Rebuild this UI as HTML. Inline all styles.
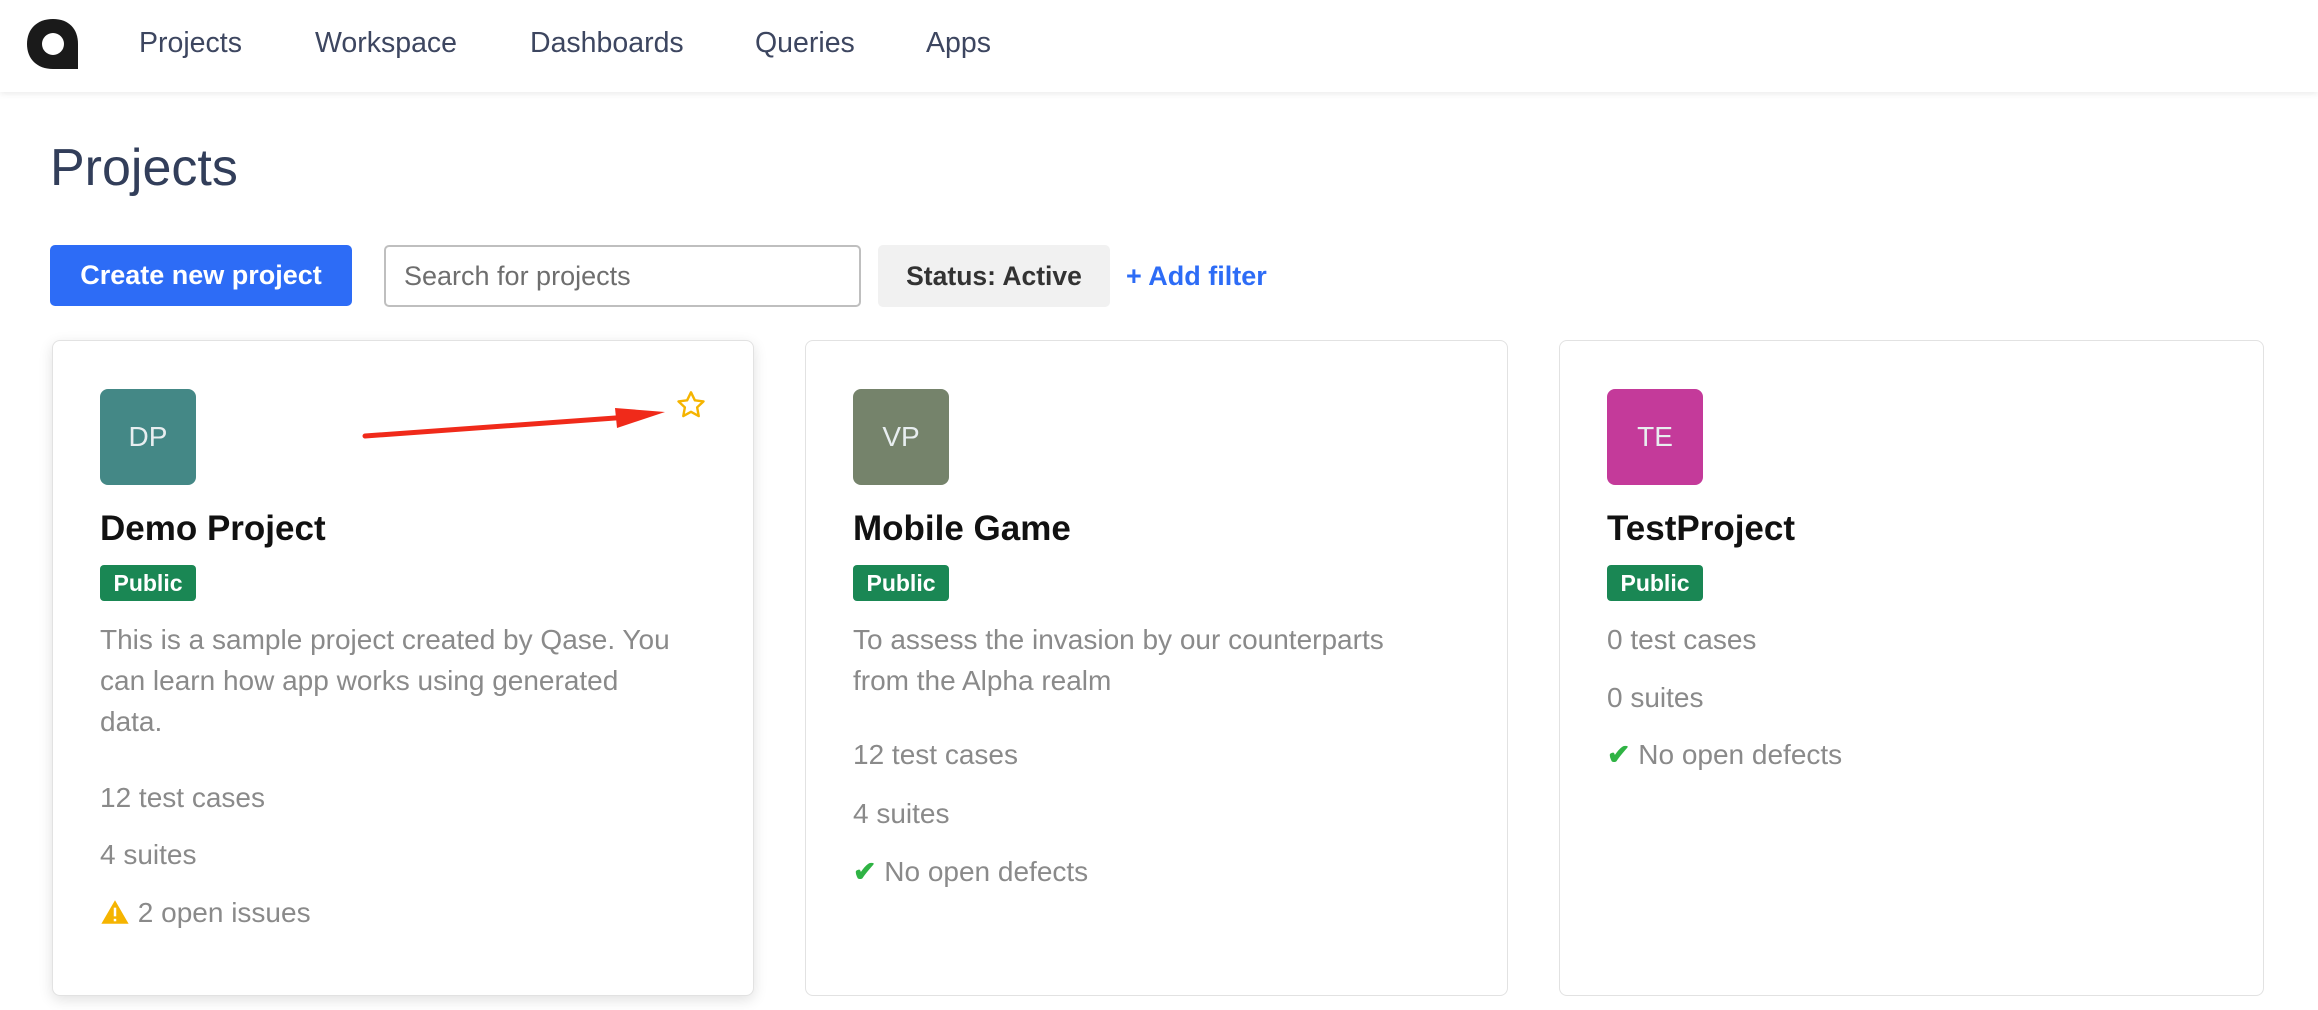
<!DOCTYPE html>
<html><head><style>
*{box-sizing:border-box;margin:0;padding:0}
body{width:2318px;height:1010px;overflow:hidden;background:#fff;font-family:"Liberation Sans",sans-serif;position:relative}
.nav{position:absolute;left:0;top:0;width:2318px;height:92px;background:#fff;box-shadow:0 2px 6px rgba(0,0,0,.08)}
.nav a{position:absolute;top:27px;font-size:28.5px;color:#3d4660;font-weight:500}
.abs{position:absolute}
h1{position:absolute;left:50px;top:138px;font-size:52px;font-weight:500;color:#323e5a}
.btn{position:absolute;left:50px;top:245px;width:302px;height:61px;background:#2d6cf6;border-radius:5px;color:#fff;font-weight:bold;font-size:27px;line-height:61px;text-align:center}
.search{position:absolute;left:384px;top:245px;width:477px;height:62px;border:2px solid #bfbfbf;border-radius:5px;font-size:27px;color:#6e6e6e;line-height:58px;padding-left:18px}
.status{position:absolute;left:878px;top:245px;width:232px;height:62px;background:#f1f1f1;border-radius:5px;font-size:26.5px;color:#333;font-weight:bold;line-height:62px;text-align:center}
.add{position:absolute;left:1126px;top:261px;font-size:27px;color:#2d6cf6;font-weight:bold}
.card{position:absolute;top:340px;height:656px;border:1.5px solid #e2e2e2;border-radius:8px;background:#fff}
.c1{left:52px;width:702px;box-shadow:0 4px 14px rgba(0,0,0,.12)}
.c2{left:805px;width:703px}.c3{left:1559px;width:705px}
.av{position:absolute;left:47px;top:48px;width:96px;height:96px;border-radius:8px;color:#e8eef0;font-size:28px;text-align:center;line-height:96px}
.tt{position:absolute;left:47px;top:168px;font-size:35px;font-weight:bold;color:#111}
.bd{position:absolute;left:47px;top:224px;width:96px;height:36px;background:#1a8754;border-radius:4px;color:#fff;font-weight:bold;font-size:23px;line-height:36px;text-align:center}
.tx{position:absolute;left:47px;font-size:28px;color:#8a8a8a;line-height:41px}
</style></head><body>
<div class="nav">
<svg class="abs" style="left:24px;top:17px" width="58" height="54" viewBox="0 0 58 54"><path d="M29 2C13 2 3 12 3 27s10 25 26 25h25V27C54 12 45 2 29 2z" fill="#1a1a1a"/><circle cx="29" cy="27" r="11" fill="#fff"/></svg>
<a style="left:139px">Projects</a><a style="left:315px">Workspace</a><a style="left:530px">Dashboards</a><a style="left:755px">Queries</a><a style="left:926px">Apps</a>
</div>
<h1>Projects</h1>
<div class="btn">Create new project</div>
<div class="search">Search for projects</div>
<div class="status">Status: Active</div>
<div class="add">+ Add filter</div>

<div class="card c1">
<div class="av" style="background:#448886">DP</div>
<svg class="abs" style="left:622px;top:48px" width="32" height="32" viewBox="0 0 24 24"><path d="M12 2.5l2.9 6 6.5.8-4.8 4.5 1.2 6.5L12 17.1l-5.8 3.2 1.2-6.5L2.6 9.3l6.5-.8z" fill="none" stroke="#f5b400" stroke-width="1.8" stroke-linejoin="round"/></svg>
<svg class="abs" style="left:300px;top:55px" width="320" height="50"><path d="M12 40L290 20" stroke="#f02a1a" stroke-width="5" stroke-linecap="round"/><path d="M262 12L312 16L264 32z" fill="#f02a1a"/></svg>
<div class="tt">Demo Project</div><div class="bd">Public</div>
<div class="tx" style="top:278px">This is a sample project created by Qase. You<br>can learn how app works using generated<br>data.</div>
<div class="tx" style="top:436px">12 test cases</div>
<div class="tx" style="top:493px">4 suites</div>
<div class="tx" style="top:551px"><svg width="30" height="26" viewBox="0 0 24 21" style="vertical-align:-3px"><path d="M12 1L23 20H1z" fill="#f5b400"/><rect x="11" y="7" width="2" height="7" fill="#fff"/><rect x="11" y="16" width="2" height="2" fill="#fff"/></svg> 2 open issues</div>
</div>

<div class="card c2">
<div class="av" style="background:#75836b">VP</div>
<div class="tt">Mobile Game</div><div class="bd">Public</div>
<div class="tx" style="top:278px">To assess the invasion by our counterparts<br>from the Alpha realm</div>
<div class="tx" style="top:393px">12 test cases</div>
<div class="tx" style="top:452px">4 suites</div>
<div class="tx" style="top:510px"><span style="color:#2fb344;font-weight:bold">✔</span> No open defects</div>
</div>

<div class="card c3">
<div class="av" style="background:#c43a9a">TE</div>
<div class="tt">TestProject</div><div class="bd">Public</div>
<div class="tx" style="top:278px">0 test cases</div>
<div class="tx" style="top:336px">0 suites</div>
<div class="tx" style="top:393px"><span style="color:#2fb344;font-weight:bold">✔</span> No open defects</div>
</div>
</body></html>
